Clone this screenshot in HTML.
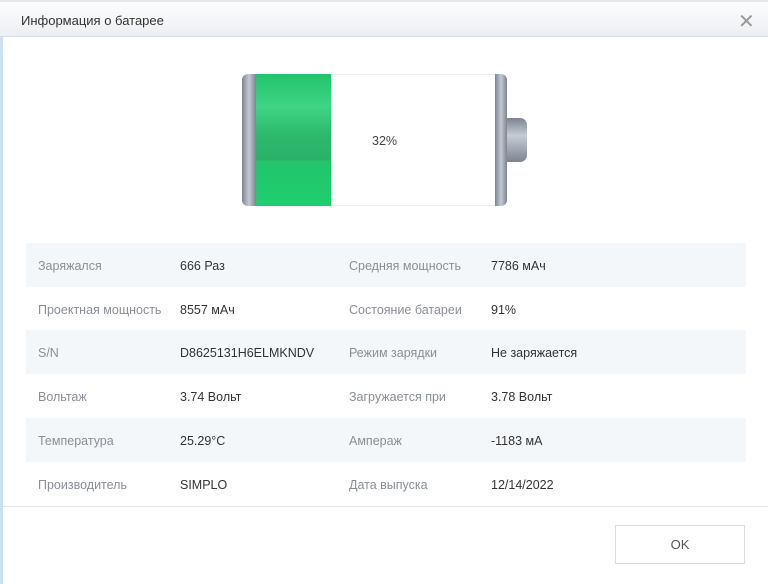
<!DOCTYPE html>
<html><head><meta charset="utf-8"><style>
*{margin:0;padding:0;box-sizing:border-box}
body{width:768px;height:584px;background:#fff;font-family:"Liberation Sans","DejaVu Sans",sans-serif;position:relative;overflow:hidden}
.title{position:absolute;left:0;top:0;width:768px;height:37px;background:linear-gradient(#fdfdfe,#eceff3);border-bottom:1px solid #d8dde3;border-top:2px solid #e4e8ee}
.title span{position:absolute;left:21px;top:11px;font-size:13px;color:#333}
.x{position:absolute;left:738px;top:7px;font-size:20px;color:#999;font-weight:300}
.lb{position:absolute;left:0;top:37px;width:3px;height:547px;background:#cfe0ee}
.row{position:absolute;left:26px;width:720px;height:44px;font-size:12.5px}
.s{background:#f4f7fa}
.row span{position:absolute;top:16px}
.l{color:#8a8f96}.v{color:#333}
.sep{position:absolute;left:3px;top:506px;width:765px;height:1px;background:#e3e6ea}
.ok{position:absolute;left:615px;top:525px;width:130px;height:39px;border:1px solid #d8dbe0;background:#fff;font-size:13px;color:#555;text-align:center;line-height:38px}
</style></head><body>
<div class="title"><span>Информация о батарее</span><div class="x">✕</div></div>
<div class="lb"></div>
<div style="position:absolute;left:242px;top:74px;width:14px;height:132px;border-radius:6px 0 0 6px;background:linear-gradient(90deg,#7c8491,#c4cad3 50%,#7c8491)"></div>
<div style="position:absolute;left:256px;top:74px;width:75px;height:132px;background:linear-gradient(#22c36b,#3fd586 25%,#2dba6c 45%,#2bb068 65%,#22c46c 66%,#1fcf6e)"></div>
<div style="position:absolute;left:331px;top:74px;width:164px;height:132px;border-top:1px solid #eee;border-bottom:1px solid #eee;background:#fff"></div>
<div style="position:absolute;left:495px;top:74px;width:12px;height:132px;border-radius:0 6px 6px 0;background:linear-gradient(90deg,#7c8491,#c4cad3 50%,#7c8491)"></div>
<div style="position:absolute;left:507px;top:118px;width:20px;height:44px;border-radius:0 7px 7px 0;background:linear-gradient(#7c8491,#c6ccd4 40%,#7c8491)"></div>
<div style="position:absolute;left:372px;top:134px;font-size:12.5px;color:#444">32%</div>
<div class="row s" style="top:243px"><span class="l" style="left:12px">Заряжался</span><span class="v" style="left:154px">666 Раз</span><span class="l" style="left:323px">Средняя мощность</span><span class="v" style="left:465px">7786 мАч</span></div>
<div class="row" style="top:287px"><span class="l" style="left:12px">Проектная мощность</span><span class="v" style="left:154px">8557 мАч</span><span class="l" style="left:323px">Состояние батареи</span><span class="v" style="left:465px">91%</span></div>
<div class="row s" style="top:330px"><span class="l" style="left:12px">S/N</span><span class="v" style="left:154px">D8625131H6ELMKNDV</span><span class="l" style="left:323px">Режим зарядки</span><span class="v" style="left:465px">Не заряжается</span></div>
<div class="row" style="top:374px"><span class="l" style="left:12px">Вольтаж</span><span class="v" style="left:154px">3.74 Вольт</span><span class="l" style="left:323px">Загружается при</span><span class="v" style="left:465px">3.78 Вольт</span></div>
<div class="row s" style="top:418px"><span class="l" style="left:12px">Температура</span><span class="v" style="left:154px">25.29°C</span><span class="l" style="left:323px">Ампераж</span><span class="v" style="left:465px">-1183 мА</span></div>
<div class="row" style="top:462px"><span class="l" style="left:12px">Производитель</span><span class="v" style="left:154px">SIMPLO</span><span class="l" style="left:323px">Дата выпуска</span><span class="v" style="left:465px">12/14/2022</span></div>
<div class="sep"></div>
<div class="ok">OK</div>
</body></html>
